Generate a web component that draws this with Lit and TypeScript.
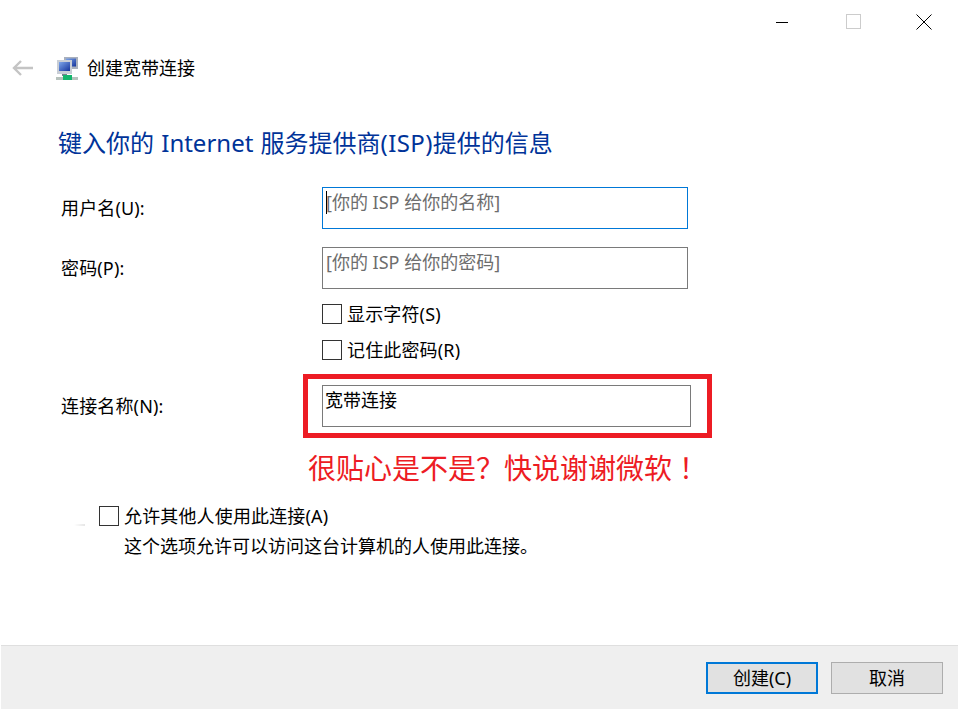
import { LitElement, html, css } from "lit";
import { customElement } from "lit/decorators.js";

const FONT = css`"Noto Sans", "Noto Sans CJK SC", sans-serif`;

@customElement("app-root")
export class AppRoot extends LitElement {
  static styles = css`
    :host {
      display: block;
      width: 960px;
      height: 710px;
      background: #fff;
      color: #000;
      font-family: ${FONT};
      font-size: 18px;
      overflow: hidden;
    }
    .window {
      height: 710px;
      display: flex;
      flex-direction: column;
    }
    .controls {
      height: 45px;
      display: flex;
      justify-content: flex-end;
      padding-right: 28px;
      gap: 55px;
    }
    .controls svg {
      display: block;
      margin-top: 14px;
    }
    .nav {
      height: 46px;
      display: flex;
      align-items: center;
      padding-left: 12px;
    }
    .back {
      margin-right: 23px;
    }
    .app-icon {
      margin-right: 9px;
    }
    .nav-title {
      line-height: 26px;
    }
    h1 {
      margin: 35px 0 0 58px;
      font-size: 24px;
      line-height: 34px;
      font-weight: 400;
      color: #003399;
      white-space: nowrap;
      word-spacing: 1px;
    }
    h1 span {
      letter-spacing: 0.4px;
    }
    .form {
      margin: 27px 0 0 61px;
    }
    .row {
      display: flex;
      align-items: center;
    }
    .row.gap-field {
      margin-top: 18px;
    }
    .row.gap-name {
      margin-top: 17px;
    }
    .name {
      width: 261px;
      line-height: 26px;
      flex: none;
      letter-spacing: 0.15px;
    }
    .field {
      position: relative;
      width: 366px;
      height: 42px;
      box-sizing: border-box;
      border: 1px solid #7a7a7a;
    }
    .field.focused {
      border-color: #0078d7;
    }
    .field.wide {
      width: 369px;
    }
    .field input {
      display: block;
      width: 100%;
      height: 100%;
      box-sizing: border-box;
      border: 0;
      outline: 0;
      padding: 0 0 13px 3px;
      background: none;
      color: #000;
      font: inherit;
    }
    .field.wide input {
      padding: 0 0 15px 2px;
    }
    .field input::placeholder {
      color: #6d6d6d;
      opacity: 1;
    }
    .caret {
      position: absolute;
      left: 3px;
      top: 3px;
      width: 1px;
      height: 23px;
      background: #000;
    }
    .highlight {
      position: absolute;
      left: -20px;
      top: -12px;
      width: 409px;
      height: 64px;
      box-sizing: border-box;
      border: 5px solid #ed1c24;
      pointer-events: none;
    }
    .check {
      display: flex;
      align-items: center;
      height: 36px;
      line-height: 26px;
      gap: 5px;
      letter-spacing: 0.15px;
    }
    .check input {
      appearance: none;
      width: 20px;
      height: 20px;
      margin: 0;
      box-sizing: border-box;
      border: 1.5px solid #333;
      background: #fff;
    }
    .checks {
      margin: 7px 0 0 261px;
    }
    .remark {
      margin: 20px 0 0 247px;
      font-size: 28px;
      line-height: 40px;
      color: #ed1c24;
      white-space: nowrap;
    }
    .bang {
      font-family: "Noto Sans CJK TC", sans-serif;
    }
    .share {
      position: relative;
      margin: 17px 0 0 99px;
    }
    .share::before {
      content: "";
      position: absolute;
      left: -25px;
      top: 19px;
      width: 11px;
      height: 2px;
      background: linear-gradient(90deg, #fff, #e6e6e6);
    }
    .share .check {
      height: 22px;
    }
    .share p {
      margin: 6px 0 0 25px;
      line-height: 26px;
    }
    footer {
      margin: auto 2px 1px 1px;
      height: 64px;
      box-sizing: border-box;
      border-top: 1px solid #dfdfdf;
      background: #efefef;
      display: flex;
      justify-content: flex-end;
      align-items: center;
      gap: 13px;
      padding: 0 15px 0 0;
    }
    button {
      width: 112px;
      height: 32px;
      box-sizing: border-box;
      border: 1px solid #adadad;
      background: #e1e1e1;
      color: #000;
      font: inherit;
      line-height: 26px;
      padding: 0;
    }
    button.default {
      border: 2px solid #0078d7;
    }
  `;

  render() {
    return html`
      <div class="window">
        <div class="controls">
          <svg width="15" height="16" viewBox="0 0 15 16">
            <path d="M0 8.5H12" stroke="#000" fill="none" />
          </svg>
          <svg width="15" height="16" viewBox="0 0 15 16">
            <rect x=".5" y=".5" width="14" height="14" fill="none" stroke="#ccc" />
          </svg>
          <svg width="16" height="16" viewBox="0 0 16 16">
            <path d="M.5.5 15.5 15.5M15.5.5 .5 15.5" stroke="#000" fill="none" />
          </svg>
        </div>
        <div class="nav">
          <svg class="back" width="21" height="16" viewBox="0 0 21 16">
            <path d="M9 1 2 8l7 7M2 8h19" stroke="#c4c4c4" stroke-width="2.4" fill="none" />
          </svg>
          <svg class="app-icon" width="22" height="25" viewBox="0 0 22 25">
            <defs>
              <linearGradient id="scr" x1="0" y1="0" x2="1" y2="1">
                <stop offset="0" stop-color="#7ea6ea" />
                <stop offset="1" stop-color="#15349c" />
              </linearGradient>
            </defs>
            <rect x="8" y="1" width="14" height="12" fill="#a9b0bd" />
            <rect x="10" y="2.5" width="10" height="8" fill="url(#scr)" />
            <rect x="1" y="4" width="15" height="14" fill="#c9ced6" />
            <rect x="3" y="6" width="11" height="9" fill="url(#scr)" />
            <rect x="6" y="18" width="5" height="2" fill="#7a8290" />
            <rect x="0" y="21" width="22" height="3" fill="#b7c2bd" />
            <rect x="7" y="19" width="9" height="5" fill="#15b56d" />
          </svg>
          <span class="nav-title">创建宽带连接</span>
        </div>
        <h1>键入你的 Internet 服务提供商<span>(ISP)</span>提供的信息</h1>
        <div class="form">
          <div class="row">
            <label class="name">用户名(U):</label>
            <div class="field focused">
              <input placeholder="[你的 ISP 给你的名称]" />
              <span class="caret"></span>
            </div>
          </div>
          <div class="row gap-field">
            <label class="name">密码(P):</label>
            <div class="field">
              <input placeholder="[你的 ISP 给你的密码]" />
            </div>
          </div>
          <div class="checks">
            <label class="check"><input type="checkbox" />显示字符(S)</label>
            <label class="check"><input type="checkbox" />记住此密码(R)</label>
          </div>
          <div class="row gap-name">
            <label class="name">连接名称(N):</label>
            <div class="field wide">
              <input .value=${"宽带连接"} />
              <span class="highlight"></span>
            </div>
          </div>
          <div class="remark">很贴心是不是？快说谢谢微软<span class="bang">！</span></div>
        </div>
        <div class="share">
          <label class="check"><input type="checkbox" />允许其他人使用此连接(A)</label>
          <p>这个选项允许可以访问这台计算机的人使用此连接。</p>
        </div>
        <footer>
          <button class="default">创建(C)</button>
          <button>取消</button>
        </footer>
      </div>
    `;
  }
}
